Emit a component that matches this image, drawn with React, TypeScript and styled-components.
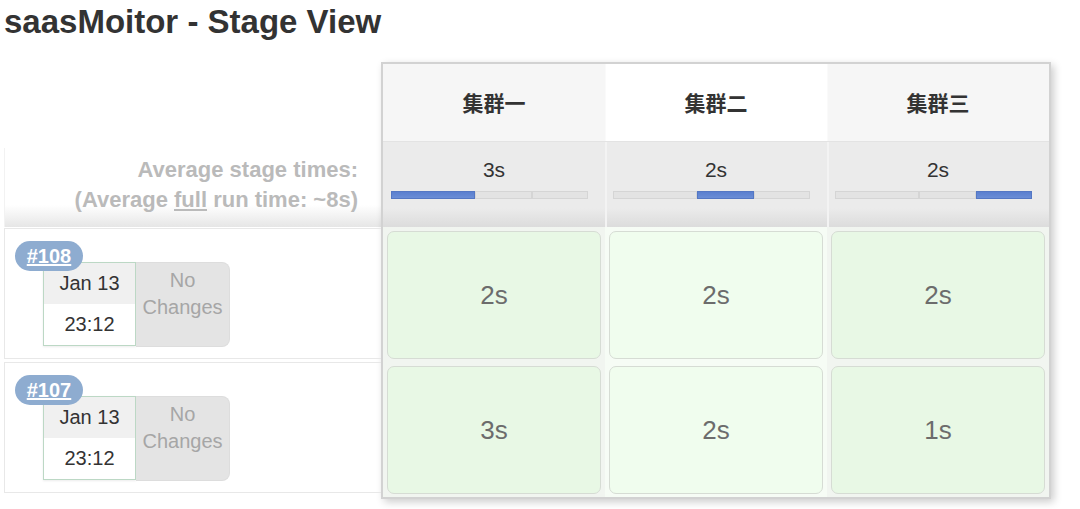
import React from "react";
import styled, { createGlobalStyle } from "styled-components";

const GlobalStyle = createGlobalStyle`
  html, body { margin: 0; padding: 0; background: #ffffff; }
  body { font-family: "Liberation Sans", Arial, "Noto Sans CJK SC", sans-serif; color: #333; }
`;

const Page = styled.div`
  width: 1080px;
  height: 509px;
  overflow: hidden;
`;

const Title = styled.h2`
  margin: 0 0 24px 0;
  padding: 5px 0 0 4px;
  font-size: 33px;
  line-height: 33px;
  font-weight: bold;
  color: #333;
`;

const Board = styled.div`
  display: flex;
  align-items: flex-start;
  padding-left: 4px;
`;

const RunColumn = styled.div`
  width: 377px;
  display: flex;
  flex-direction: column;
`;

const HeaderSpacer = styled.div`
  height: 86px;
`;

const AvgLabel = styled.div`
  height: 79px;
  box-sizing: border-box;
  padding: 7px 23px 0 0;
  border-left: 1px solid #f2f2f2;
  background: linear-gradient(to bottom, #ffffff 0%, #ffffff 72%, #e6e6e6 100%);
  text-align: right;
  font-size: 22px;
  line-height: 30px;
  font-weight: bold;
  color: #bababa;
  white-space: nowrap;
  & u { text-decoration: underline; }
`;

const RunRow = styled.div<{ $gap: number }>`
  position: relative;
  margin-top: ${(p) => p.$gap}px;
  height: 131px;
  box-sizing: border-box;
  border: 1px solid #e8e8e8;
  border-right: none;
  padding: 33px 0 0 38px;
`;

const Badge = styled.a`
  position: absolute;
  left: 10px;
  top: 12px;
  z-index: 2;
  width: 68px;
  height: 30px;
  border-radius: 15px;
  background: #8eacd0;
  color: #ffffff;
  font-size: 20px;
  font-weight: bold;
  line-height: 30px;
  text-align: center;
  text-decoration: underline;
`;

const RunCard = styled.div`
  display: flex;
`;

const DateBox = styled.div`
  width: 93px;
  height: 84px;
  box-sizing: border-box;
  border: 1px solid #bcd8c5;
  box-shadow: 0 1px 2px rgba(0, 0, 0, 0.08);
  display: flex;
  flex-direction: column;
  background: #ffffff;
`;

const DatePart = styled.div<{ $shaded?: boolean }>`
  flex: 1;
  display: flex;
  align-items: center;
  justify-content: center;
  font-size: 20px;
  color: #333;
  background: ${(p) => (p.$shaded ? "#f0f0f0" : "#ffffff")};
`;

const ChangesBox = styled.div`
  width: 94px;
  height: 85px;
  box-sizing: border-box;
  padding-top: 4px;
  background: #e4e4e4;
  border: 1px solid #dddddd;
  border-left: none;
  border-radius: 0 8px 8px 0;
  text-align: center;
  font-size: 20px;
  line-height: 27px;
  color: #a6a6a6;
`;

const StageTable = styled.div`
  display: grid;
  grid-template-columns: repeat(3, 222px);
  grid-template-rows: 78px 85px 135px 135px;
  border: 2px solid #d2d2d2;
  box-shadow: 3px 3px 8px rgba(0, 0, 0, 0.2);
  background: #ffffff;
`;

const HeaderCell = styled.div<{ $hover?: boolean }>`
  display: flex;
  align-items: center;
  justify-content: center;
  padding-bottom: 2px;
  background: ${(p) => (p.$hover ? "#ffffff" : "#f6f6f6")};
  border-bottom: 1px solid #e3e3e3;
  font-family: "Noto Sans CJK SC", "Liberation Sans", sans-serif;
  font-size: 21px;
  font-weight: bold;
  color: #333;
  & + & { box-shadow: inset 1px 0 0 #fafafa; }
`;

const AvgCell = styled.div`
  box-sizing: border-box;
  padding-top: 17px;
  background: linear-gradient(to bottom, #ebebeb 0%, #ebebeb 78%, #dcdcdc 100%);
  & + & { box-shadow: inset 2px 0 0 #f3f3f3; }
`;

const AvgTime = styled.div`
  text-align: center;
  font-size: 21px;
  line-height: 22px;
  color: #333;
`;

const Bar = styled.div`
  display: flex;
  width: 197px;
  height: 8px;
  margin: 10px 0 0 8px;
`;

const Segment = styled.div<{ $active?: boolean }>`
  box-sizing: border-box;
  height: 8px;
  background: ${(p) => (p.$active ? "linear-gradient(to bottom, #5a7fcf, #6a8dd6)" : "#e3e3e3")};
  border: 1px solid ${(p) => (p.$active ? "#5477c4" : "#d5d5d5")};
`;

const StageSlot = styled.div<{ $hover?: boolean }>`
  padding: 4px 4px 3px 4px;
  background: ${(p) => (p.$hover ? "#f6fcf5" : "#f1f5f0")};
`;

const StageBox = styled.div<{ $hover?: boolean }>`
  height: 100%;
  box-sizing: border-box;
  border: 1px solid #d6dcd4;
  border-radius: 7px;
  background: ${(p) => (p.$hover ? "#f0fdee" : "#e8f8e5")};
  display: flex;
  align-items: center;
  justify-content: center;
  font-size: 26px;
  color: #6c6c6c;
`;

const stages = ["集群一", "集群二", "集群三"];
const avgTimes = ["3s", "2s", "2s"];
const weights = [3, 2, 2];
const total = weights.reduce((a, b) => a + b, 0);
const hoverCol = 1;

const runs = [
  { id: "#108", date: "Jan 13", time: "23:12", durations: ["2s", "2s", "2s"] },
  { id: "#107", date: "Jan 13", time: "23:12", durations: ["3s", "2s", "1s"] },
];

export default function App() {
  return (
    <Page>
      <GlobalStyle />
      <Title>saasMoitor - Stage View</Title>
      <Board>
        <RunColumn>
          <HeaderSpacer />
          <AvgLabel>
            Average stage times:
            <br />
            (Average <u>full</u> run time: ~8s)
          </AvgLabel>
          {runs.map((r, i) => (
            <RunRow key={r.id} $gap={i === 0 ? 1 : 3}>
              <Badge>{r.id}</Badge>
              <RunCard>
                <DateBox>
                  <DatePart $shaded>{r.date}</DatePart>
                  <DatePart>{r.time}</DatePart>
                </DateBox>
                <ChangesBox>
                  No
                  <br />
                  Changes
                </ChangesBox>
              </RunCard>
            </RunRow>
          ))}
        </RunColumn>
        <StageTable>
          {stages.map((s, i) => (
            <HeaderCell key={s} $hover={i === hoverCol}>
              {s}
            </HeaderCell>
          ))}
          {avgTimes.map((t, i) => (
            <AvgCell key={i}>
              <AvgTime>{t}</AvgTime>
              <Bar>
                {weights.map((w, j) => (
                  <Segment key={j} $active={j === i} style={{ width: `${(w / total) * 100}%` }} />
                ))}
              </Bar>
            </AvgCell>
          ))}
          {runs.map((r) =>
            r.durations.map((d, i) => (
              <StageSlot key={r.id + i} $hover={i === hoverCol}>
                <StageBox $hover={i === hoverCol}>{d}</StageBox>
              </StageSlot>
            ))
          )}
        </StageTable>
      </Board>
    </Page>
  );
}
